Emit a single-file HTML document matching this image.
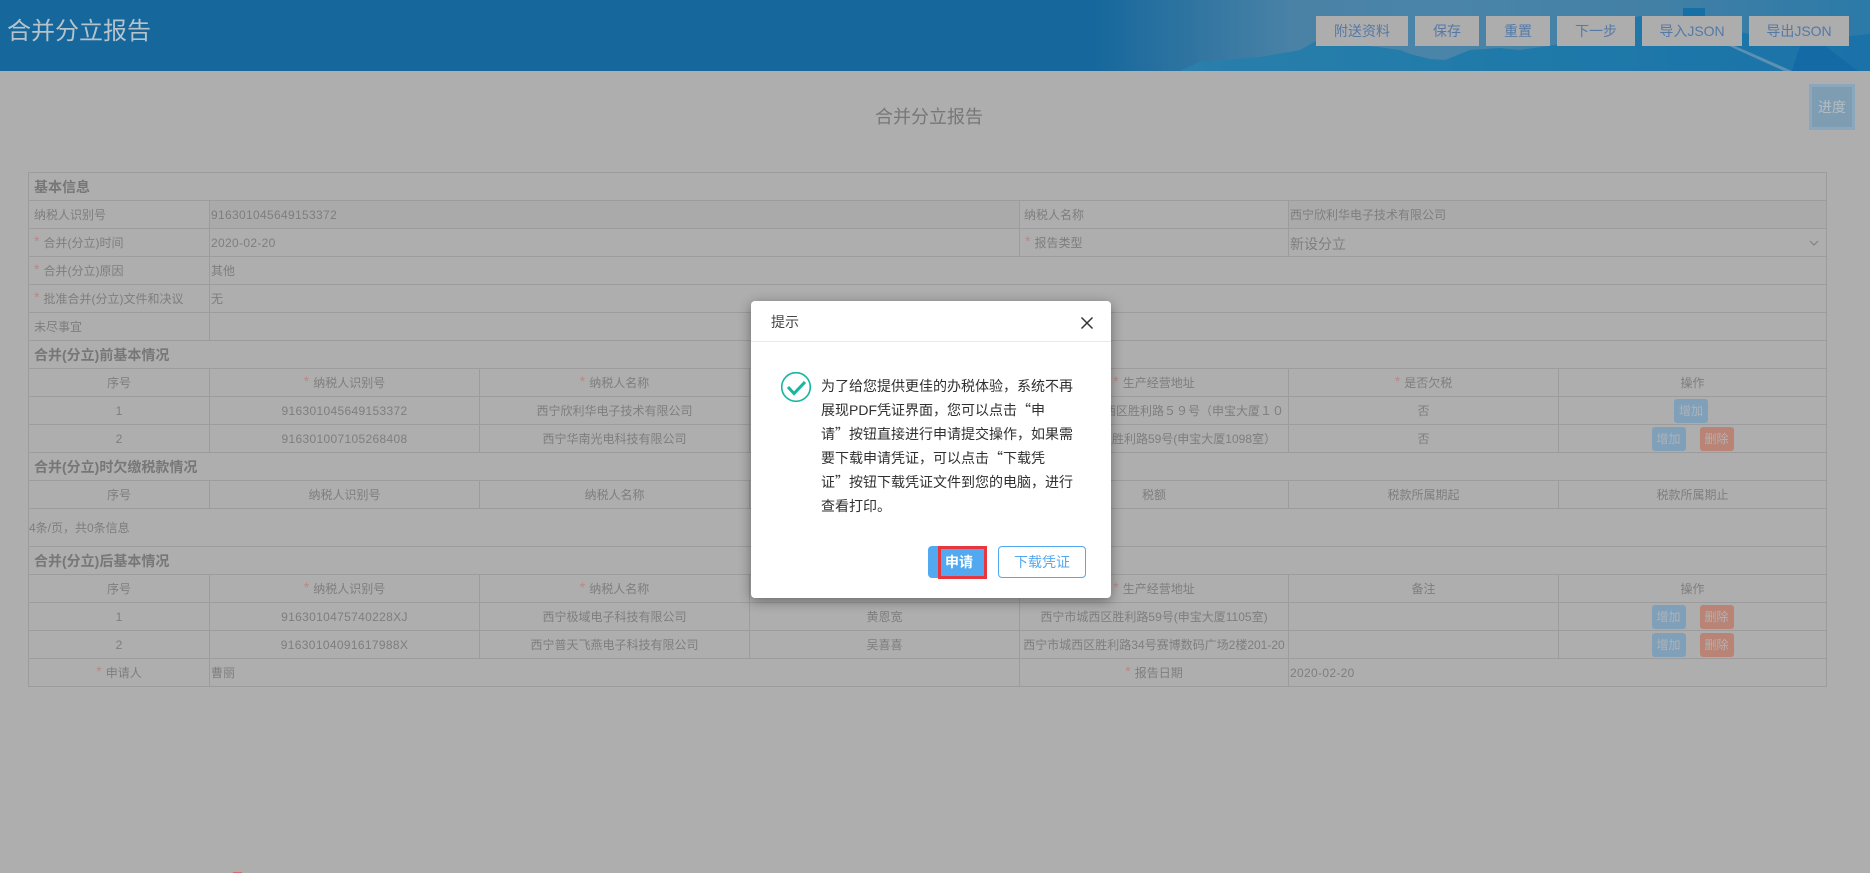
<!DOCTYPE html>
<html lang="zh-CN">
<head>
<meta charset="utf-8">
<title>合并分立报告</title>
<style>
*{box-sizing:border-box}
html,body{margin:0;padding:0;width:1870px;height:873px;overflow:hidden;background:#aeaeae;font-family:"Liberation Sans","Noto Sans CJK SC",sans-serif;color:#7e7e7e;font-size:12px}
.abs{position:absolute}
.hd{position:absolute;left:0;top:0;width:1870px;height:71px;background:#15679c}
.ttl{position:absolute;left:7px;top:14px;font-size:24px;line-height:36px;color:#b6c3ca}
.tb{position:absolute;top:16px;height:30px;background:#adadad;color:#5479a6;font-size:14px;line-height:30px;text-align:center;white-space:nowrap}
.ptitle{position:absolute;left:875px;top:104px;font-size:18px;line-height:26px;color:#777;white-space:nowrap}
.prog{position:absolute;left:1809px;top:84px;width:46px;height:46px;background:#7f9db2;border:3px solid #8aa7bd;color:#b2bdc4;font-size:14px;line-height:40px;text-align:center}
table{position:absolute;left:28px;top:172px;border-collapse:separate;border-spacing:0;table-layout:fixed;width:1799px;border-left:1px solid #9c9c9c;border-top:1px solid #9c9c9c}
td{height:28px;padding:0;border-right:1px solid #9c9c9c;border-bottom:1px solid #9c9c9c;font-size:12px;line-height:16px;text-align:center;white-space:nowrap;overflow:hidden;color:#7e7e7e;vertical-align:middle;position:relative}
tr{height:28px}
td.s{text-align:left;padding-left:5px;font-size:14px;font-weight:bold;color:#777}
td.l{text-align:left;padding-left:5px}
td.v{text-align:left;padding-left:1px}
.n{letter-spacing:.33px}
i{font-style:normal;font-size:14px;color:#b88888;margin-right:4px;position:relative;top:-1px}
.b{display:inline-block;width:34px;height:24px;border-radius:3px;line-height:24px;font-size:12px;color:#aeb3b7;text-align:center;vertical-align:middle}
.bl{background:#80a0ba}
.rd{background:#b98375;margin-left:14px}
.dlg{position:absolute;left:751px;top:301px;width:360px;height:297px;background:#fff;border-radius:4px;box-shadow:0 3px 12px rgba(0,0,0,.4)}
.dh{position:absolute;left:0;top:0;width:360px;height:41px;border-bottom:1px solid #e8eaec}
.dt{position:absolute;left:20px;top:10px;font-size:14px;line-height:22px;color:#444}
.dm{position:absolute;left:70px;top:73px;width:260px;font-size:14px;line-height:24px;color:#2f2f2f;white-space:nowrap}
.q{font-family:"Noto Sans CJK SC",sans-serif}
.b1{position:absolute;left:177px;top:245px;width:59px;height:32px;background:#53a9f0;border-radius:4px}
.b1r{position:absolute;left:187px;top:245px;width:49px;height:33px;border:3px solid #e8363f;color:#fff;font-size:14px;font-weight:bold;line-height:27px;padding-left:4px;white-space:nowrap}
.b2{position:absolute;left:247px;top:245px;width:88px;height:32px;background:#fff;border:1px solid #53a9f0;border-radius:4px;color:#53a9f0;font-size:14px;line-height:30px;text-align:center}
</style>
</head>
<body>
<div class="hd">
<svg width="1870" height="71" style="position:absolute;left:0;top:0">
<defs>
<linearGradient id="g" x1="0" x2="1" y1="0" y2="0">
<stop offset="0" stop-color="#15679c"/>
<stop offset=".26" stop-color="#4a82a6"/>
<stop offset=".45" stop-color="#4a84a9"/>
<stop offset=".72" stop-color="#4380a6"/>
<stop offset="1" stop-color="#2b7aa8"/>
</linearGradient>
<linearGradient id="w" x1="0" x2="1" y1="0" y2="0">
<stop offset="0" stop-color="#2a7fab"/>
<stop offset=".5" stop-color="#1f7aa9"/>
<stop offset="1" stop-color="#1b72a8"/>
</linearGradient>
</defs>
<rect x="1090" y="0" width="780" height="71" fill="url(#g)"/>
<polygon points="1180,71 1200,62 1260,57 1300,50 1316,41 1370,46 1400,50 1410,54 1430,59 1445,60 1470,50 1500,48 1520,50 1555,45 1600,25 1640,16 1690,18 1730,30 1790,42 1870,34 1870,71" fill="url(#w)"/>
<rect x="1683" y="8" width="22" height="8" fill="#1770a5"/>
<polygon points="1729,46 1735,46 1792,71 1784,71" fill="#5d90b2"/>
<polygon points="1800,46 1825,46 1858,71 1792,71" fill="#146aa5"/>
</svg>
<div class="ttl">合并分立报告</div>
<div class="tb" style="left:1316px;width:92px">附送资料</div>
<div class="tb" style="left:1415px;width:64px">保存</div>
<div class="tb" style="left:1486px;width:64px">重置</div>
<div class="tb" style="left:1557px;width:78px">下一步</div>
<div class="tb" style="left:1642px;width:100px">导入JSON</div>
<div class="tb" style="left:1749px;width:100px">导出JSON</div>
</div>
<div class="ptitle">合并分立报告</div>
<div class="prog">进度</div>

<table>
<colgroup><col style="width:181px"><col style="width:270px"><col style="width:270px"><col style="width:270px"><col style="width:269px"><col style="width:270px"><col style="width:268px"></colgroup>
<tr><td class="s" colspan="7">基本信息</td></tr>
<tr style="background:#aaa"><td class="l" style="background:#aeaeae">纳税人识别号</td><td class="v n" colspan="3">916301045649153372</td><td class="l" style="background:#aeaeae;padding-left:4px">纳税人名称</td><td class="v" colspan="2">西宁欣利华电子技术有限公司</td></tr>
<tr><td class="l"><i>*</i>合并(分立)时间</td><td class="v n" colspan="3">2020-02-20</td><td class="l"><i>*</i>报告类型</td><td class="v" colspan="2" style="font-size:14px"><span style="position:relative;top:1px">新设分立</span><svg width="10" height="6" style="position:absolute;right:7px;top:11px"><path d="M1 1L5 5L9 1" fill="none" stroke="#7e7e7e" stroke-width="1"/></svg></td></tr>
<tr><td class="l"><i>*</i>合并(分立)原因</td><td class="v" colspan="6">其他</td></tr>
<tr><td class="l"><i>*</i>批准合并(分立)文件和决议</td><td class="v" colspan="6">无</td></tr>
<tr><td class="l">未尽事宜</td><td class="v" colspan="6"></td></tr>
<tr><td class="s" colspan="7">合并(分立)前基本情况</td></tr>
<tr><td>序号</td><td><i>*</i>纳税人识别号</td><td><i>*</i>纳税人名称</td><td><i>*</i>法定代表人</td><td><i>*</i>生产经营地址</td><td><i>*</i>是否欠税</td><td>操作</td></tr>
<tr><td>1</td><td class="n">916301045649153372</td><td>西宁欣利华电子技术有限公司</td><td>曹丽</td><td style="text-align:right;padding-right:4px">西宁市城西区胜利路５９号（申宝大厦１０</td><td>否</td><td><span class="b bl" style="margin-right:3px">增加</span></td></tr>
<tr><td>2</td><td class="n">916301007105268408</td><td>西宁华南光电科技有限公司</td><td>李明</td><td style="text-align:right;padding-right:12px">西宁市城西区胜利路59号(申宝大厦1098室）</td><td>否</td><td><span class="b bl">增加</span><span class="b rd">删除</span></td></tr>
<tr><td class="s" colspan="7">合并(分立)时欠缴税款情况</td></tr>
<tr><td>序号</td><td>纳税人识别号</td><td>纳税人名称</td><td>税种</td><td>税额</td><td>税款所属期起</td><td>税款所属期止</td></tr>
<tr style="height:38px"><td colspan="7" style="height:38px;text-align:left">4条/页，共0条信息</td></tr>
<tr><td class="s" colspan="7">合并(分立)后基本情况</td></tr>
<tr><td>序号</td><td><i>*</i>纳税人识别号</td><td><i>*</i>纳税人名称</td><td><i>*</i>法定代表人</td><td><i>*</i>生产经营地址</td><td>备注</td><td>操作</td></tr>
<tr><td>1</td><td class="n">9163010475740228XJ</td><td>西宁极域电子科技有限公司</td><td>黄恩宽</td><td>西宁市城西区胜利路59号(申宝大厦1105室)</td><td></td><td><span class="b bl">增加</span><span class="b rd">删除</span></td></tr>
<tr><td>2</td><td class="n">91630104091617988X</td><td>西宁普天飞燕电子科技有限公司</td><td>吴喜喜</td><td>西宁市城西区胜利路34号赛博数码广场2楼201-20</td><td></td><td><span class="b bl">增加</span><span class="b rd">删除</span></td></tr>
<tr><td><i>*</i>申请人</td><td class="v" colspan="3">曹丽</td><td><i>*</i>报告日期</td><td class="v n" colspan="2">2020-02-20</td></tr>
</table>

<div class="abs" style="left:233px;top:872px;width:9px;height:1px;background:#d66"></div>

<div class="dlg">
<div class="dh"><div class="dt">提示</div>
<svg width="14" height="14" style="position:absolute;left:329px;top:15px"><path d="M1.5 1.5L12.5 12.5M12.5 1.5L1.5 12.5" fill="none" stroke="#333" stroke-width="1.5"/></svg>
</div>
<svg width="32" height="32" style="position:absolute;left:29px;top:70px">
<circle cx="16" cy="16" r="14.3" fill="none" stroke="#16b79d" stroke-width="1.6"/>
<path d="M8 16L14 22.5L25 11" fill="none" stroke="#16b79d" stroke-width="3"/>
</svg>
<div class="dm">为了给您提供更佳的办税体验，系统不再<br>展现PDF凭证界面，您可以点击<span class="q">“</span>申<br>请<span class="q">”</span>按钮直接进行申请提交操作，如果需<br>要下载申请凭证，可以点击<span class="q">“</span>下载凭<br>证<span class="q">”</span>按钮下载凭证文件到您的电脑，进行<br>查看打印。</div>
<div class="b1"></div>
<div class="b1r">申请</div>
<div class="b2">下载凭证</div>
</div>
</body>
</html>
